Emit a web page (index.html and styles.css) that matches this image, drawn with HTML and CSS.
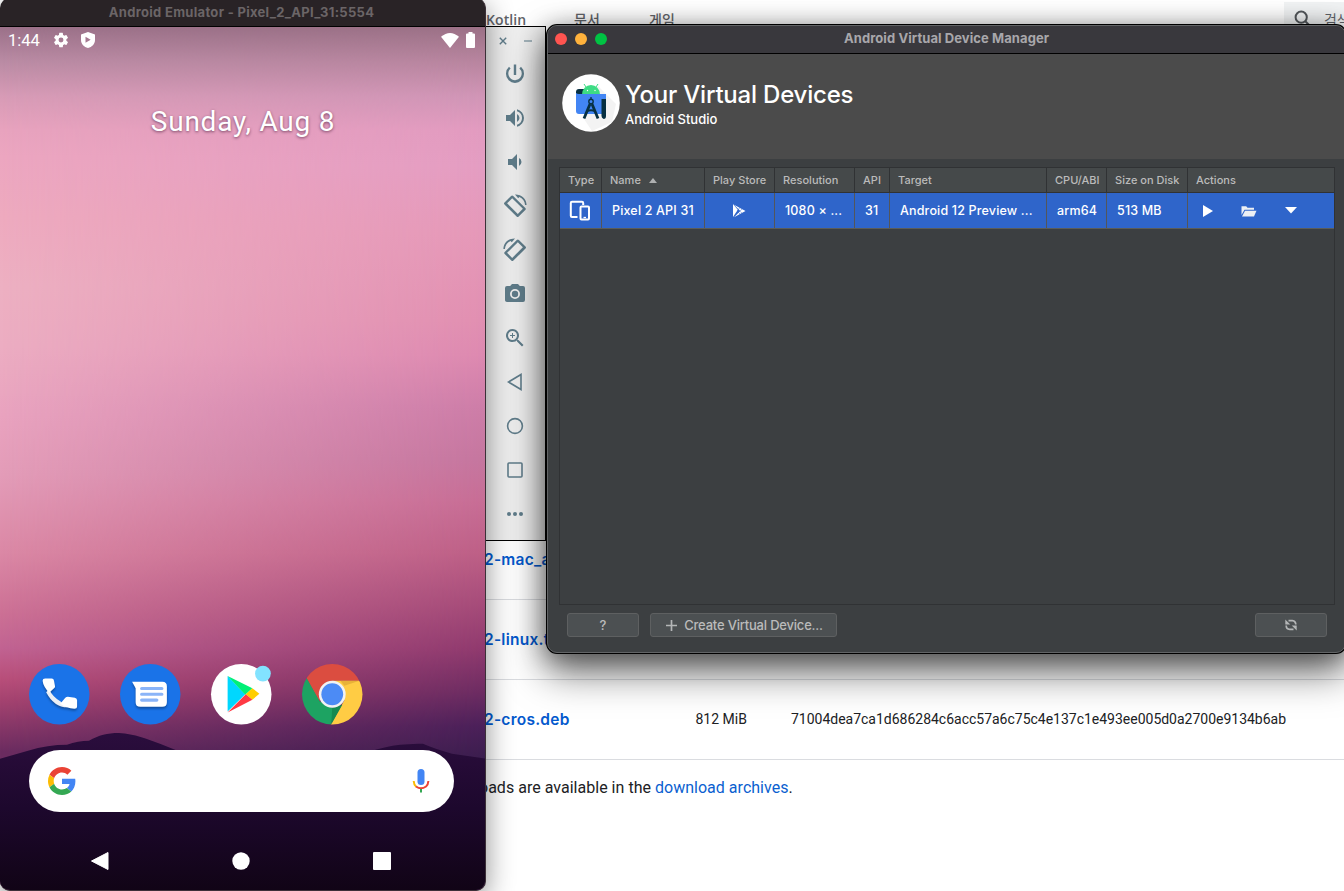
FILE: index.html
```
<!DOCTYPE html>
<html lang="ko">
<head>
<meta charset="utf-8">
<title>Android Virtual Device Manager</title>
<link rel="stylesheet" href="styles.css">
</head>
<body>
<main class="page">
  <header class="site-nav">
    <nav class="site-links"><span class="kotlin">Kotlin</span><span class="docs">문서</span><span>게임</span></nav>
    <div class="search">
      <svg width="18" height="18" viewBox="0 0 18 18" fill="none" stroke="#53575b" stroke-width="2"><circle cx="7.2" cy="7.2" r="5.6"/><path d="M11.3 11.3 16.5 16.5"/></svg>
      <span>검색</span>
    </div>
  </header>
  <section class="downloads">
    <div class="dl-row"><a>2-mac_a</a></div>
    <div class="dl-row"><a>2-linux.t</a></div>
    <div class="dl-row"><a>2-cros.deb</a><span>812 MiB</span><span class="hash">71004dea7ca1d686284c6acc57a6c75c4e137c1e493ee005d0a2700e9134b6ab</span></div>
  </section>
  <p class="archive">oads are available in the <a>download archives</a>.</p>
</main>

<aside class="tools">
  <div class="tools-top">
    <svg width="8" height="8" viewBox="0 0 8 8"><path d="M.8.8 7.2 7.2M7.2.8.8 7.2" stroke="#607d8b" stroke-width="1.4"/></svg>
    <svg width="8" height="8" viewBox="0 0 8 8"><path d="M0 4H8" stroke="#8ba0aa" stroke-width="1.5"/></svg>
  </div>
  <div class="tool"><svg viewBox="0 0 24 24"><path d="M13.200 2.500h-2.400v10.500h2.400zM18 4.800l-1.600 1.600A6.700 6.700 0 0 1 18.700 12a6.700 6.700 0 1 1-11.100-5.600L6 4.800A9 9 0 0 0 3 12a9 9 0 1 0 18 0 9 9 0 0 0-3-7.200z"/></svg></div>
  <div class="tool"><svg viewBox="0 0 24 24"><path d="M3 9v6h4l5 5V4L7 9H3zm13.500 3A4.500 4.500 0 0 0 14 7.970v8.050A4.470 4.470 0 0 0 16.500 12zM14 3.230v2.060a7 7 0 0 1 0 13.420v2.060a9 9 0 0 0 0-17.540z"/></svg></div>
  <div class="tool"><svg viewBox="0 0 24 24"><path d="M5 9v6h4l5 5V4L9 9H5zm11-1v8a4.500 4.500 0 0 0 2.500-4A4.500 4.500 0 0 0 16 8z"/></svg></div>
  <div class="tool"><svg viewBox="0 0 24 24" class="rotate"><g id="rot"><path fill-rule="evenodd" d="M10.200 1.900a1.500 1.500 0 0 0-2.100 0L1.500 8.400a1.500 1.500 0 0 0 0 2.100L13.600 22.600a1.500 1.500 0 0 0 2.100 0l6.600-6.500a1.500 1.500 0 0 0 0-2.100zM9.200 4.200l10.700 10.600-5.100 5.100L4.100 9.300z"/><path d="M12 .5c6.600-.2 11.400 4.300 11.600 10.500h-1.500c-.3-3.800-2.600-6.700-5.700-7.900l-1.200 1.200z"/></g></svg></div>
  <div class="tool"><svg viewBox="0 0 24 24" class="rotate flip"><use href="#rot"/></svg></div>
  <div class="tool"><svg viewBox="0 0 24 24"><path fill-rule="evenodd" d="M9 2 7.200 4H4a2 2 0 0 0-2 2v12c0 1.100.9 2 2 2h16a2 2 0 0 0 2-2V6a2 2 0 0 0-2-2h-3.200L15 2zm3 15a5 5 0 1 1 0-10 5 5 0 0 1 0 10z"/><circle cx="12" cy="12" r="3.200"/></svg></div>
  <div class="tool"><svg viewBox="0 0 24 24"><path d="M15.500 14h-.79l-.28-.27a6.500 6.500 0 1 0-.7.7l.27.28v.79l5 4.990L20.490 19zm-6 0a4.500 4.500 0 1 1 0-9 4.500 4.500 0 0 1 0 9zM12 10h-2v2H9v-2H7V9h2V7h1v2h2z"/></svg></div>
  <div class="tool"><svg viewBox="0 0 24 24" class="outline"><path d="M18 4.500v15L5.500 12z"/></svg></div>
  <div class="tool"><svg viewBox="0 0 24 24" class="outline"><circle cx="12" cy="12" r="7.400"/></svg></div>
  <div class="tool"><svg viewBox="0 0 24 24" class="outline"><rect x="5" y="5" width="14" height="14" rx="1"/></svg></div>
  <div class="tool"><svg viewBox="0 0 24 24"><circle cx="6" cy="12" r="2"/><circle cx="12" cy="12" r="2"/><circle cx="18" cy="12" r="2"/></svg></div>
</aside>

<section class="avd">
  <div class="avd-bar">
    <i class="dot red"></i><i class="dot yellow"></i><i class="dot green"></i>
    <span class="avd-title">Android Virtual Device Manager</span>
  </div>
  <div class="avd-head">
    <svg class="studio" width="58" height="58" viewBox="0 0 58 58">
      <circle cx="29" cy="29" r="28.800" fill="#fff"/>
      <path d="M36 12 54 30 50 48 30 57 22 45z" fill="#f3f3f3"/>
      <path d="M14 22v-4q0-3 3-3h7v7z" fill="#073042"/>
      <path d="M20 20.500a9 9.500 0 0 1 18 0z" fill="#3ddc84"/><path d="m24 13-2-3m12 3 2-3" stroke="#3ddc84"/>
      <circle cx="25.500" cy="16.500" r=".7" fill="#fff"/><circle cx="33" cy="16.500" r=".7" fill="#fff"/>
      <path d="M14 19q1 1 3 1h27v17q0 3-3 3H17q-3 0-3-3z" fill="#4285f4"/>
      <path d="M39.500 25H44v17q0 3-2.300 3-2.200-1-2.200-3z" fill="#073042"/>
      <g stroke="#073042" fill="none"><circle cx="29" cy="27.500" r="2.200" stroke-width="1.400"/><path d="M29 23v2.500" stroke-width="1.300"/><path d="m28 30-6 14.500M30 30l6 14.500" stroke-width="2.800"/><path d="M24.500 37.500q4.500-2.500 9 0" stroke-width="1.800"/></g>
    </svg>
    <div><h1>Your Virtual Devices</h1><h2>Android Studio</h2></div>
  </div>
  <div class="avd-body">
    <div class="table">
      <div class="tr th">
        <span class="c-type">Type</span><span class="c-name">Name <svg width="8" height="5"><path d="M0 5 4 0 8 5z" fill="#aeb0b1"/></svg></span><span>Play Store</span><span>Resolution</span><span>API</span><span>Target</span><span>CPU/ABI</span><span>Size on Disk</span><span>Actions</span>
      </div>
      <div class="tr td">
        <span class="c-icon"><svg width="22" height="22" viewBox="0 0 22 22" fill="none" stroke="#fff" stroke-width="2"><path d="M8.500 17H3q-1.200 0-1.200-1.200V3Q1.800 1.800 3 1.800h10q1.200 0 1.200 1.200V5"/><rect x="11.500" y="6.500" width="8.500" height="13" rx="1"/><path d="M14.500 17.500h2.500" stroke-width="1.300"/></svg></span>
        <span class="v-name">Pixel 2 API 31</span>
        <span class="c-icon"><svg width="14" height="14" viewBox="0 0 14 14"><path d="M1 0 5.800 5.800 1 13z" fill="#fff"/><path d="M2 .7 13.500 7 2 13.300 8.300 7z" fill="#fff"/><path d="m8 3.500-3 3.500 4 4M10.500 4.500 8 7.200l2.500 2.500" stroke="#2f65ca" stroke-width=".5" fill="none"/></svg></span>
        <span>1080 × ...</span><span class="v-api">31</span><span>Android 12 Preview ...</span><span class="v-cpu">arm64</span><span>513 MB</span>
        <span class="actions"><svg width="11" height="12"><path d="M1 0 11 6 1 12z" fill="#fff"/></svg><svg width="16" height="12" viewBox="0 0 16 12"><path d="M.5 10V1.200h4.700l1.300 1.600H13v2H3.500z" fill="#edf0f4"/><path d="M4 5.800h11.500L13 11.500H1z" fill="#edf0f4"/></svg><svg width="12" height="7"><path d="M0 0h12L6 6.500z" fill="#fff"/></svg></span>
      </div>
    </div>
    <div class="buttons">
      <span class="btn help">?</span>
      <span class="btn create"><svg width="11" height="11"><path d="M5.500 0v11M0 5.500h11" stroke="#b4b6b7" stroke-width="1.700"/></svg>Create Virtual Device...</span>
      <span class="btn refresh"><svg width="14" height="14" viewBox="0 0 14 14" fill="none" stroke="#b4b6b7" stroke-width="1.700"><path d="M4.500 2.600H8.300Q11.800 3 11.800 6.600M9.500 11.400H5.700Q2.200 11 2.200 7.400"/><path d="M1.300 1.500v5h5zM12.700 12.500v-5h-5z" fill="#b4b6b7" stroke="none"/></svg></span>
    </div>
  </div>
</section>

<section class="phone">
  <div class="phone-bar">Android Emulator - Pixel_2_API_31:5554</div>
  <div class="screen">
    <svg class="hills" width="486" height="162" viewBox="0 0 486 162" preserveAspectRatio="none">
      <defs><linearGradient id="night" x1="0" y1="0" x2="0" y2="1"><stop offset="0" stop-color="#2b0d3d"/><stop offset=".48" stop-color="#1d082d"/><stop offset="1" stop-color="#110416"/></linearGradient></defs>
      <path fill="url(#night)" d="M0 29 28 21Q48 15 67 15 78 11 89 11C99 5 107 3 119 3 135 4 147 9 160 14L185 24H365C380 18 395 14 423 14Q434 19 452 24L486 29V162H0z"/>
    </svg>
    <div class="status">
      <span>1:44</span>
      <svg width="18" height="18" viewBox="0 0 24 24" fill="#fff"><path fill-rule="evenodd" d="M19.140 12.940a7.100 7.100 0 0 0 0-1.880l2.030-1.580a.5.500 0 0 0 .12-.61l-1.920-3.320a.5.500 0 0 0-.59-.22l-2.390.96a7 7 0 0 0-1.620-.94l-.36-2.540a.5.500 0 0 0-.48-.41h-3.840a.5.500 0 0 0-.47.41l-.36 2.540a7.300 7.300 0 0 0-1.620.94l-2.390-.96a.5.500 0 0 0-.59.220L2.740 8.870a.5.500 0 0 0 .12.610l2.030 1.580a7.200 7.200 0 0 0 0 1.880l-2.030 1.580a.5.500 0 0 0-.12.610l1.920 3.320c.12.220.37.290.59.220l2.390-.96c.5.380 1.030.7 1.620.94l.36 2.540c.5.240.24.410.48.410h3.840c.24 0 .44-.17.470-.41l.36-2.540a7.300 7.300 0 0 0 1.620-.94l2.390.96c.22.080.47 0 .59-.22l1.920-3.320a.5.500 0 0 0-.12-.61zM12 15.300a3.300 3.300 0 1 1 0-6.600 3.300 3.300 0 0 1 0 6.600z"/></svg>
      <svg class="shield" width="14" height="16" viewBox="0 0 14 16"><path fill-rule="evenodd" fill="#fff" d="M7 0 14 2.500V8c0 4-3 7-7 8-4-1-7-4-7-8V2.500zM4.500 4.800v6L9.700 7.800z"/></svg>
      <svg class="wifi" width="18" height="15" viewBox="0 0 18 15"><path fill="#fff" d="M0 3.800Q9-3.800 18 3.800L9 15z"/></svg>
      <svg width="9" height="16" viewBox="0 0 9 16"><path fill="#fff" d="M2.500 0h4v1.500H8q1 0 1 1V15q0 1-1 1H1q-1 0-1-1V2.500q0-1 1-1h1.500z"/></svg>
    </div>
    <div class="date">Sunday, Aug 8</div>
    <div class="dock">
      <svg viewBox="0 0 60 60"><circle cx="30" cy="30" r="30" fill="#1a73e8"/><g class="drop"><path d="M17 28q8 15 21 15L31 37Q23 32 20 25z" fill="#eceff5"/><path d="M16 14.500h6.500q2 0 2.300 2l1 5.500q.2 1-.7 1.800L20 28.500Q14 22 13.500 16.500 13.500 14.500 16 14.500zM36 33.500q1-1 2.500-1l7 1q2.200.5 2.200 2.500V42q0 2.500-2.700 2.500Q37 44 31 39.500z" fill="#fff"/></g></svg>
      <svg viewBox="0 0 60 60"><circle cx="30" cy="30" r="30" fill="#1a73e8"/><path class="drop" d="M12 17.500h30q4.500 0 4.500 4.500v16q0 4.500-4.500 4.500H20q-4.500 0-4.500-4.500V24z" fill="#fff"/><path d="M21.500 24.300h20M21.500 30h20M21.500 35.800h15" stroke="#8ab4f8" stroke-width="3.200" stroke-linecap="round"/></svg>
      <svg viewBox="0 0 60 60" class="play"><circle cx="30" cy="30" r="30" fill="#fff"/><path d="M16.500 12v35L34 30z" fill="#00d7fe"/><path d="M16.500 12 41 24 34 30.500z" fill="#00f076"/><path d="M41 24 48 29.500 41 35.500 34.500 30z" fill="#ffce00"/><path d="M34.500 30 41 35.500 16.500 48z" fill="#ff3a44"/><circle cx="51.500" cy="9.500" r="7.800" fill="#82e3ff"/></svg>
      <svg viewBox="0 0 60 60"><defs><clipPath id="disc"><circle cx="30" cy="30" r="30"/></clipPath></defs><g clip-path="url(#disc)"><path d="M-1 -1H61V16.500H30L17 37 4 13z" fill="#db4d40"/><path d="M4 13 17.500 37 30 43.500 35.500 42 28 61H-1V13z" fill="#1da362"/><path d="M30 16.500H61V61H28L42 36z" fill="#ffcc44"/><path d="M38 16.500h19l-15 5z" fill="#d8a030" opacity=".6"/><path d="m30 43.500 10-3L29 60z" fill="#168a50"/></g><circle cx="30" cy="30" r="13.300" fill="#f2f2f2"/><circle cx="30" cy="30" r="10.800" fill="#4c8bf5"/></svg>
    </div>
    <div class="searchbar">
      <svg width="28" height="28" viewBox="0 0 48 48"><path fill="#EA4335" d="M24 9.500c3.540 0 6.710 1.220 9.210 3.600l6.850-6.850C35.900 2.380 30.470 0 24 0 14.620 0 6.510 5.380 2.560 13.220l7.980 6.190C12.430 13.720 17.740 9.500 24 9.500z"/><path fill="#4285F4" d="M46.980 24.550c0-1.570-.15-3.090-.38-4.550H24v9.020h12.940c-.58 2.960-2.260 5.480-4.780 7.180l7.730 6c4.510-4.180 7.090-10.360 7.090-17.650z"/><path fill="#FBBC05" d="M10.530 28.590A14.500 14.500 0 0 1 9.770 24c0-1.600.27-3.140.76-4.590l-7.980-6.190A23.900 23.900 0 0 0 0 24c0 3.880.92 7.540 2.560 10.780z"/><path fill="#34A853" d="M24 48c6.480 0 11.930-2.130 15.890-5.810l-7.730-6c-2.150 1.450-4.920 2.300-8.160 2.300-6.260 0-11.570-4.220-13.470-9.910l-7.980 6.190C6.510 42.620 14.620 48 24 48z"/></svg>
      <svg width="18" height="24" viewBox="0 0 18 24" fill="none"><rect x="5.500" width="7" height="16" rx="3.500" fill="#4285f4"/><path d="M1.700 12q.2 4 2.500 5.700" stroke="#fbbc05" stroke-width="2"/><path d="M4 17.500q5 3.500 10 0 2.200-2 2.400-5.500" stroke="#ea4335" stroke-width="2"/><path d="M9 20v3.500" stroke="#34a853" stroke-width="2"/></svg>
    </div>
    <div class="navkeys">
      <svg width="20" height="20"><path d="M18 1.500v17L1.500 10z" fill="#fff" stroke="#fff" stroke-linejoin="round"/></svg>
      <svg width="20" height="20"><circle cx="10" cy="10" r="8.700" fill="#fff"/></svg>
      <svg width="20" height="20"><rect x="1" y="1" width="18" height="18" rx="1" fill="#fff"/></svg>
    </div>
  </div>
</section>
</body>
</html>
```
FILE: styles.css
```
* { box-sizing: border-box; }
body { margin: 0; width: 1344px; height: 891px; position: relative; overflow: hidden; background: #fff; font-family: Roboto, "Noto Sans CJK KR", sans-serif; }
svg { display: block; flex: none; }
h1, h2, p { margin: 0; }

/* documentation page */
.page { padding-left: 484px; height: 891px; }
.site-nav { height: 520px; display: flex; justify-content: space-between; align-items: flex-start; }
.site-links { display: flex; padding: 10px 0 0 2px; font: 500 14px/20px "Open Sans", "Noto Sans CJK KR", sans-serif; color: #5f6368; }
.kotlin { width: 88px; letter-spacing: .1px; font-weight: 600; }
.docs { width: 75px; }
.search { display: flex; gap: 12px; width: 60px; height: 36px; margin-top: 2px; padding: 8px 0 0 10px; background: #f1f3f4; color: #5f6368; overflow: hidden; font: 14px/18px "Noto Sans CJK KR", sans-serif; white-space: nowrap; }
.dl-row { height: 80px; border-bottom: 1px solid #dadce0; display: grid; grid-template-columns: 211.5px 95.5px 1fr; align-items: center; font-size: 14px; color: #202124; }
.dl-row a { font: 600 15.500px Inter, sans-serif; letter-spacing: .25px; color: #0459cd; }
.dl-row span { padding-bottom: 1px; }
.hash { letter-spacing: -.01px; }
.archive { margin-left: -5px; padding-top: 16px; font-size: 16px; line-height: 24px; letter-spacing: .02px; color: #202124; }
.archive a { color: #0b5fd0; }

/* emulator toolbar */
.tools { position: absolute; left: 485px; top: 26px; width: 61px; height: 515px; border: 1px solid #000; background: #efefef; }
.tools-top { height: 25px; display: flex; gap: 17px; padding: 10px 0 0 13px; }
.tool { height: 44px; display: flex; align-items: center; justify-content: center; padding-right: 1px; }
.tool svg { width: 24px; height: 24px; fill: #607d8b; }
.tool .rotate { width: 24px; height: 24px; }
.tool .outline { fill: none; stroke: #607d8b; stroke-width: 1.600; width: 24px; height: 24px; }
.flip { transform: scaleX(-1); }

/* device manager */
.avd { position: absolute; left: 547px; top: 25px; width: 799px; height: 628px; border-radius: 10px; background: #3c3f41; border: 1px solid #626466; box-shadow: 0 0 0 1px #000, 0 4px 26px rgba(0,0,0,.4), 0 18px 38px 2px rgba(0,0,0,.55); font-family: Inter, sans-serif; }
.avd-bar { height: 28px; display: flex; align-items: center; gap: 8px; padding: 0 0 2px 7px; background: #39383d; border-bottom: 1px solid #000; border-radius: 9px 9px 0 0; }
.dot { width: 12px; height: 12px; border-radius: 50%; }
.red { background: #ff5450; }
.yellow { background: #ffb23c; }
.green { background: #00c343; }
.avd-title { margin-left: 229px; padding-bottom: 2px; font-size: 13px; font-weight: 700; letter-spacing: .08px; color: #a8a7ab; }
.avd-head { height: 105px; padding: 20px 0 0 14px; display: flex; gap: 5px; background: #4b4b4b; color: #fff; }
.avd-head h1 { font-size: 24px; line-height: 28px; font-weight: 500; margin-top: 7px; letter-spacing: -.2px; white-space: nowrap; }
.avd-head h2 { font-size: 13px; line-height: 18px; margin-top: 1px; font-weight: 500; }
.avd-body { padding: 8px 10px 0 11px; }
.table { height: 438px; border: 1px solid #303234; }
.tr { display: grid; grid-template-columns: 42px 103px 70px 80px 35px 157px 60px 81px 1fr; white-space: nowrap; }
.tr > span { display: flex; align-items: center; padding-left: 8px; border-right: 1px solid #303234; }
.tr > span:last-child { border: 0; }
.th { height: 25px; background: #45494a; border-bottom: 1px solid #303234; color: #bbb; font-size: 11px; font-weight: 500; letter-spacing: .02px; }
.c-name { gap: 8px; }
.td { height: 36px; background: #2f65ca; border-bottom: 1px solid #5b5d58; color: #fff; font-size: 12.500px; font-weight: 500; letter-spacing: .17px; }
.td > span { border-color: #53565a !important; padding-left: 10px; }
.tr .c-icon { justify-content: center; padding: 0 1px 0 0; }
.td .actions { padding-left: 14px; gap: 28px; }
.buttons { display: flex; padding: 8px 8px; gap: 11px; }
.btn { height: 24px; display: flex; align-items: center; justify-content: center; background: #4c5052; border: 1px solid #5e6061; border-radius: 3px; color: #bbb; font-size: 13px; font-weight: 500; }
.help, .refresh { width: 72px; }
.create { width: 187px; padding-left: 2px; gap: 7px; letter-spacing: -.2px; }
.refresh { margin-left: auto; }

/* phone emulator */
.phone { position: absolute; left: 0; top: -2px; width: 486px; height: 893px; overflow: hidden; border-radius: 10px; border: 1px solid #3c3038; border-width: 0 1px 1px 0; box-shadow: 0 8px 28px rgba(0,0,0,.45); background: #292326; }
.phone-bar { height: 29px; padding: 2px 2px 3px 0; text-align: center; color: #6b6567; font: 700 13px/24px Inter, sans-serif; letter-spacing: .31px; border-bottom: 1px solid #000; }
.screen { height: 863px; position: relative; display: flex; flex-direction: column; background: linear-gradient(#9b7189, #ba8ba4 4%, #d79bb6 8%, #e8a3be 12%, #eca6c0 15%, #eeaabf 22%, #edb0c2 30%, #ecadc2 37%, #e9a3bf 45%, #e39cb8 52%, #db88a5 61%, #cc7095 68%, #c16392 72%, #b94f7a 75.5%, #a54370 78%, #6b2c60 84%); }
.screen::before { content: ""; position: absolute; inset: 0; background: linear-gradient(#9b7186, #b8859f 4%, #d095b6 8%, #e29bc0 12%, #e49dc2 16%, #e598b8 24%, #e18fb1 34%, #dd89b0 38%, #cd7da8 44%, #c5769f 50%, #c76d95 55%, #bd5f86 61%, #a54b79 67%, #903a6e 72%, #6d2c62 77%, #4b2059 81%, #391d4d 85%); -webkit-mask-image: linear-gradient(90deg, transparent, #000); mask-image: linear-gradient(90deg, transparent, #000); }
.screen > * { position: relative; }
.screen > .hills { position: absolute; left: 0; bottom: 0; height: 160px; }
.status { height: 26px; display: flex; align-items: center; padding: 0 10px 0 8px; color: #fff; font-size: 16.500px; }
.status span { width: 44px; }
.status .shield { margin-left: 11px; }
.status .wifi { margin: 0 7px 0 auto; }
.date { height: 611px; padding: 50px 0 0 1px; text-align: center; font-size: 28px; line-height: 38px; letter-spacing: .75px; color: #fff; text-shadow: 0 1px 3px rgba(60,20,50,.65); }
.dock { height: 61px; display: flex; gap: 30.500px; padding-left: 29px; }
.dock svg { width: 60.500px; height: 60.500px; overflow: visible; }
.drop { filter: drop-shadow(0 2px 1px rgba(0,0,0,.3)); }
.searchbar { height: 62px; width: 424.500px; margin: 25px 0 0 29px; padding: 0 24px 0 19px; display: flex; align-items: center; justify-content: space-between; border-radius: 31px; background: #fff; }
.navkeys { display: flex; justify-content: space-between; padding: 39px 93px 0 90px; }
```
